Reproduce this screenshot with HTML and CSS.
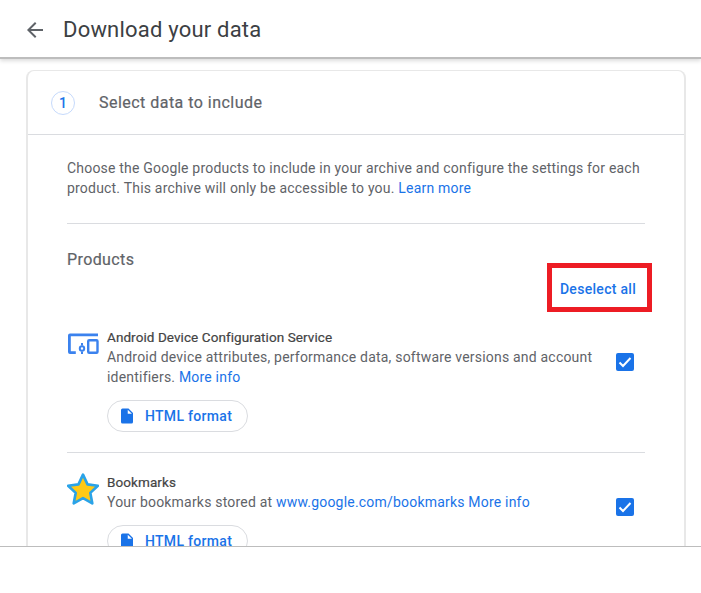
FILE: index.html
```html
<!DOCTYPE html>
<html lang="en">
<head>
<meta charset="utf-8">
<title>Download your data</title>
<link rel="stylesheet" href="styles.css">
</head>
<body>
<div class="frame">
  <header class="topbar">
    <svg class="back" viewBox="0 0 24 24" width="24" height="24"><path d="M20 11H7.83l5.59-5.59L12 4l-8 8 8 8 1.41-1.41L7.83 13H20z"/></svg>
    <h1 class="title">Download your data</h1>
  </header>
  <main class="card">
    <div class="step">
      <span class="step-num">1</span>
      <span class="step-label">Select data to include</span>
    </div>
    <div class="body">
      <p class="intro">Choose the Google products to include in your archive and configure the settings for each product. This archive will only be accessible to you. <a href="#">Learn more</a></p>
      <div class="products-head">
        <h2 class="products-title">Products</h2>
        <div class="deselect-row"><a class="deselect" href="#">Deselect all</a></div>
      </div>
      <section class="product">
        <svg class="picon" viewBox="0 0 32 24" width="32" height="24"><path fill="#3b82ee" d="M1 3.500a2 2 0 0 1 2-2h28v2.800H3.800v14.900h5V22H3a2 2 0 0 1-2-2z"/><circle cx="15" cy="16.500" r="2.200" fill="none" stroke="#3b82ee" stroke-width="2"/><path fill="#3b82ee" d="M14 11h2v2.500h-2zM14 19.500h2V22h-2z"/><rect x="21.200" y="8.200" width="9.300" height="12.600" rx="1" fill="none" stroke="#3b82ee" stroke-width="2.400"/></svg>
        <div class="pinfo">
          <h3 class="pname">Android Device Configuration Service</h3>
          <p class="pdesc">Android device attributes, performance data, software versions and account identifiers. <a href="#">More info</a></p>
          <button class="format"><svg viewBox="0 0 24 24" width="18" height="18"><path fill="#1a73e8" d="M14 2H6a2 2 0 0 0-2 2v16a2 2 0 0 0 2 2h12a2 2 0 0 0 2-2V8z"/><path fill="#fff" d="M13 3.500V9h5.500z"/></svg>HTML format</button>
        </div>
        <span class="check"><svg viewBox="0 0 18 18" width="18" height="18"><path d="M3.500 9.500l3.500 3.500 7.500-8" fill="none" stroke="#fff" stroke-width="2"/></svg></span>
      </section>
      <section class="product">
        <svg class="picon star" viewBox="1.500 1 29 29" width="32" height="32"><path fill="#ffc916" stroke="#2aa3e8" stroke-width="2.400" stroke-linejoin="round" d="M16 2.500l4.100 8.800 9.400 1.200-6.900 6.500 1.800 9.500L16 23.800 7.600 28.500l1.800-9.500-6.900-6.500 9.400-1.200z"/></svg>
        <div class="pinfo">
          <h3 class="pname">Bookmarks</h3>
          <p class="pdesc">Your bookmarks stored at <a href="#">www.google.com/bookmarks</a> <a href="#">More info</a></p>
          <button class="format"><svg viewBox="0 0 24 24" width="18" height="18"><path fill="#1a73e8" d="M14 2H6a2 2 0 0 0-2 2v16a2 2 0 0 0 2 2h12a2 2 0 0 0 2-2V8z"/><path fill="#fff" d="M13 3.500V9h5.500z"/></svg>HTML format</button>
        </div>
        <span class="check"><svg viewBox="0 0 18 18" width="18" height="18"><path d="M3.500 9.500l3.500 3.500 7.500-8" fill="none" stroke="#fff" stroke-width="2"/></svg></span>
      </section>
    </div>
  </main>
</div>
</body>
</html>
```
FILE: styles.css
```css
* { box-sizing: border-box; }
html, body { margin: 0; background: #fff; }
body { font-family: Roboto, "Liberation Sans", sans-serif; color: #5f6368; }
a { color: #1a73e8; text-decoration: none; }
.frame { height: 547px; overflow: hidden; border-bottom: 1px solid #bdbdbd; }
.topbar {
  height: 59px; display: flex; align-items: center; padding: 2px 0 0 23px;
  border-bottom: 2px solid #bdbdbd; box-shadow: 0 2px 4px rgba(0,0,0,.14);
}
.back { fill: #5f6368; flex: none; }
.title { margin: 0 0 0 16px; font-size: 22px; font-weight: 400; color: #3c4043; letter-spacing: .2px; }
.card {
  margin: 11px 15px 0 26px; border: 1px solid #e8e8e8; border-bottom: 0;
  border-radius: 8px 8px 0 0; border-left-width: 2px; border-right-width: 2px;
}
.step { height: 64px; display: flex; align-items: center; padding-left: 23px; border-bottom: 1px solid #dadce0; }
.step-num {
  width: 24px; height: 24px; border: 1px solid #c6dafc; border-radius: 50%;
  display: flex; align-items: center; justify-content: center;
  color: #1a73e8; font-size: 14px; font-weight: 500;
}
.step-label { margin-left: 24px; font-size: 16px; font-weight: 400; color: #5f6368; letter-spacing: .47px; -webkit-text-stroke: .2px #5f6368; }
.body { padding: 23px 39px 0 39px; }
.intro { margin: 0; font-size: 14px; line-height: 20px; padding-bottom: 25px; border-bottom: 1px solid #dadce0; letter-spacing: .2px; }
.products-head { padding-top: 27px; }
.products-title { margin: 0; font-size: 16px; line-height: 18px; font-weight: 400; color: #5f6368; letter-spacing: .4px; -webkit-text-stroke: .2px #5f6368; }
.deselect-row { display: flex; justify-content: flex-end; margin: -6px -7px 0 0; }
.deselect {
  width: 105px; height: 49px; border: 5px solid #ed1c24; padding: 2px 3px 0 0;
  display: flex; align-items: center; justify-content: center;
  font-size: 14px; font-weight: 500; letter-spacing: .3px;
}
.product {
  display: flex; align-items: flex-start; padding: 0 11px 20px 0; position: relative;
  border-bottom: 1px solid #dadce0;
}
.product:first-of-type { margin-top: 16px; }
.product + .product { padding-top: 20px; }
.picon { flex: none; margin: 4px 8px 0 0; }
.picon.star { margin-top: 0; }
.pinfo { flex: 1; }
.pname { margin: 0; font-size: 13.5px; line-height: 19px; font-weight: 400; color: #444; letter-spacing: .08px; -webkit-text-stroke: .2px #444; }
.pdesc { margin: 0; font-size: 14px; line-height: 20px; letter-spacing: .2px; }
.format {
  margin-top: 13px; width: 141px; height: 32px; border: 1px solid #dadce0; border-radius: 16px; background: #fff;
  display: flex; align-items: center; padding: 0 0 1px 10px; gap: 9px;
  font-family: inherit; font-size: 14px; font-weight: 500; color: #1a73e8; letter-spacing: .3px;
}
.format svg { margin-top: 1px; }
.check {
  flex: none; width: 18px; height: 18px; margin: 25px 0 0 20px; background: #1a73e8; border-radius: 2px;
  display: flex;
}
```
